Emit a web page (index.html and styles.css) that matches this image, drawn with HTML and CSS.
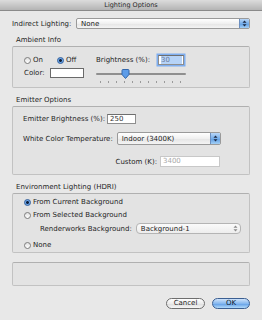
FILE: index.html
```html
<!DOCTYPE html>
<html lang="en">
<head>
    <meta charset="UTF-8">
    <meta name="viewport" content="width=device-width, initial-scale=1.0">
    <title>Lighting Options</title>
    <link rel="stylesheet" href="styles.css">
</head>
<body>

    <div class="titlebar">Lighting Options</div>

    <div class="content">

        <div class="row indirect-row">
            <span class="label">Indirect Lighting:</span>
            <div class="popup popup-indirect">
                <span class="popup-text">None</span>
                <span class="popup-arrows">
                    <svg width="5" height="7" viewBox="0 0 5 7"><path d="M2.5 0.5 L4.5 2.8 L0.5 2.8 Z M2.5 6.5 L4.5 4.2 L0.5 4.2 Z" fill="#1d2a44"/></svg>
                </span>
            </div>
        </div>

        <!-- Ambient -->
        <div class="group-title first">Ambient Info</div>
        <div class="group-box ambient-box">
            <div class="col-left">
                <div class="radios">
                    <span class="radio"><span class="dot"></span>On</span>
                    <span class="radio"><span class="dot on"></span>Off</span>
                </div>
                <div class="color-row">
                    <span>Color:</span>
                    <span class="swatch"></span>
                </div>
            </div>
            <div class="col-right">
                <div class="bright-row">
                    <span>Brightness (%):</span>
                    <span class="field field-focus"><span class="selected">30</span></span>
                </div>
                <div class="slider">
                    <div class="track"></div>
                    <svg class="thumb" width="9" height="10" viewBox="0 0 9 10"><path d="M1 1.5 Q1 0.5 2 0.5 L7 0.5 Q8 0.5 8 1.5 L8 5.5 L4.5 9.5 L1 5.5 Z" fill="#5d9ce8" stroke="#3266aa" stroke-width="1"/></svg>
                </div>
                <div class="ticks">
                    <span></span><span></span><span></span><span></span><span></span><span></span>
                    <span></span><span></span><span></span><span></span><span></span>
                </div>
            </div>
        </div>

        <!-- Emitter -->
        <div class="group-title">Emitter Options</div>
        <div class="group-box emitter-box">
            <div class="row">
                <span>Emitter Brightness (%):</span>
                <span class="field field-emitter">250</span>
            </div>
            <div class="row temp-row">
                <span>White Color Temperature:</span>
                <div class="popup popup-temp">
                    <span class="popup-text">Indoor (3400K)</span>
                    <span class="popup-arrows">
                        <svg width="5" height="7" viewBox="0 0 5 7"><path d="M2.5 0.5 L4.5 2.8 L0.5 2.8 Z M2.5 6.5 L4.5 4.2 L0.5 4.2 Z" fill="#1d2a44"/></svg>
                    </span>
                </div>
            </div>
            <div class="row custom-row">
                <span>Custom (K):</span>
                <span class="field field-custom disabled">3400</span>
            </div>
        </div>

        <!-- Environment -->
        <div class="group-title">Environment Lighting (HDRI)</div>
        <div class="group-box env-box">
            <span class="radio"><span class="dot on"></span>From Current Background</span>
            <span class="radio second"><span class="dot"></span>From Selected Background</span>
            <div class="row rw-row">
                <span>Renderworks Background:</span>
                <div class="popup popup-rw">
                    <span class="popup-text">Background-1</span>
                    <span class="popup-arrows plain">
                        <svg width="5" height="7" viewBox="0 0 5 7"><path d="M2.5 0.5 L4.5 2.8 L0.5 2.8 Z M2.5 6.5 L4.5 4.2 L0.5 4.2 Z" fill="#8a8a8a"/></svg>
                    </span>
                </div>
            </div>
            <span class="radio none"><span class="dot"></span>None</span>
        </div>

        <div class="group-box empty-box"></div>

        <div class="buttons">
            <button class="btn cancel">Cancel</button>
            <button class="btn ok">OK</button>
        </div>

    </div>

</body>
</html>
```

FILE: styles.css
```css
body {
    font-family: "DejaVu Sans", Verdana, sans-serif;
    font-size: 7px;
    color: #1e1e1e;
    background-color: #e8e8e8;
    margin: 0;
    width: 262px;
    height: 320px;
    overflow: hidden;
}

/* Window title */
.titlebar {
    height: 10px;
    line-height: 10px;
    font-size: 6.5px;
    text-align: center;
    color: #2a2a2a;
    background: linear-gradient(#dcdcdc, #b4b4b4);
    border-bottom: 1px solid #8a8a8a;
}

.content {
    padding: 7px 12px 0 12px;
}

.row {
    display: flex;
    align-items: center;
}

.indirect-row {
    height: 11px;
}

.indirect-row .label {
    width: 60px;
    margin-right: 4px;
    white-space: nowrap;
}

/* Popup menus */
.popup {
    display: flex;
    align-items: center;
    box-sizing: border-box;
    background: linear-gradient(#ffffff, #f0f0f0 50%, #e4e4e4 51%, #f4f4f4);
    border: 1px solid #9a9a9a;
    border-radius: 2px;
    overflow: hidden;
}

.popup-text {
    flex: 1;
    padding-left: 4px;
}

.popup-arrows {
    width: 9px;
    align-self: stretch;
    display: flex;
    align-items: center;
    justify-content: center;
    background: linear-gradient(#b9d6f7, #76aeea 50%, #5b9be3 51%, #a4d0f6);
    border-left: 1px solid #6c8fbf;
}

.popup-arrows.plain {
    background: none;
    border-left: none;
}

.popup-indirect {
    flex: 1;
    height: 11px;
}

.popup-temp {
    width: 104px;
    height: 13px;
    margin-left: 4px;
}

.popup-rw {
    width: 105px;
    height: 11px;
    margin-left: 4px;
    border-color: #b4b4b4;
    border-radius: 4px;
    background: linear-gradient(#fafafa, #ededed);
}

/* Group boxes */
.group-title {
    height: 9px;
    line-height: 9px;
    padding-left: 4px;
    margin-top: 8px;
    margin-bottom: 1px;
}

.group-title.first {
    margin-top: 7px;
}

.group-box {
    box-sizing: border-box;
    background-color: #e3e3e3;
    border: 1px solid #c2c2c2;
    border-top-color: #b0b0b0;
    border-radius: 2px;
}

.ambient-box {
    height: 42px;
    display: flex;
}

.col-left {
    width: 83px;
    padding: 8px 0 0 11px;
    box-sizing: border-box;
}

.radios {
    display: flex;
    gap: 14px;
    height: 10px;
}

.radio {
    display: flex;
    align-items: center;
    height: 10px;
}

.dot {
    width: 7px;
    height: 7px;
    box-sizing: border-box;
    border: 1px solid #7d7d7d;
    border-radius: 50%;
    background: linear-gradient(#e0e0e0, #ffffff);
    margin-right: 2px;
}

.dot.on {
    border-color: #2e5d9c;
    background: radial-gradient(circle, #10203a 0, #10203a 1.2px, #5f9de6 1.6px, #9cc6f4 100%);
}

.color-row {
    display: flex;
    align-items: center;
    height: 10px;
    margin-top: 3px;
}

.swatch {
    width: 34px;
    height: 10px;
    box-sizing: border-box;
    margin-left: 5px;
    background: #ffffff;
    border: 1px solid #6a6a6a;
}

.col-right {
    padding-top: 8px;
    width: 90px;
}

.bright-row {
    display: flex;
    align-items: center;
    justify-content: space-between;
    height: 10px;
}

/* Text fields */
.field {
    box-sizing: border-box;
    background: #ffffff;
    border: 1px solid #8e8e8e;
    border-top-color: #6e6e6e;
    padding-left: 2px;
    line-height: 8px;
    height: 10px;
}

.field-focus {
    width: 26px;
    margin-right: 2px;
    box-shadow: 0 0 0 1.5px #7eaef0;
}

.selected {
    display: inline-block;
    background: #b6d3f7;
    width: 21px;
    color: #6a7a9a;
}

.field-emitter {
    width: 29px;
    margin-left: 2px;
    color: #333;
}

.field-custom {
    width: 60px;
    height: 11px;
    margin-left: 3px;
    border-color: #c8c8c8;
    line-height: 9px;
}

.disabled {
    color: #a8a8a8;
}

/* Slider */
.slider {
    position: relative;
    height: 10px;
    margin-top: 4px;
    display: flex;
    align-items: center;
}

.track {
    width: 90px;
    height: 2px;
    background: #8f8f8f;
    border-radius: 1px;
}

.thumb {
    position: absolute;
    left: 25px;
    top: 0;
}

.ticks {
    display: flex;
    justify-content: space-between;
    padding: 0 5px 0 4px;
    margin-top: 2px;
    height: 2px;
}

.ticks span {
    width: 1px;
    height: 2px;
    background: #9a9a9a;
}

.emitter-box {
    height: 69px;
    padding: 7px 0 0 10px;
}

.emitter-box .row {
    height: 10px;
}

.emitter-box .temp-row {
    height: 13px;
    margin-top: 8px;
}

.emitter-box .custom-row {
    height: 11px;
    margin-top: 11px;
    width: 197px;
    justify-content: flex-end;
}

.env-box {
    height: 60px;
    padding: 3px 0 0 11px;
}

.env-box .second {
    margin-top: 3px;
}

.rw-row {
    height: 11px;
    margin-top: 3px;
    padding-left: 16px;
}

.env-box .none {
    margin-top: 6px;
}

.empty-box {
    height: 24px;
    margin-top: 9px;
}

/* Buttons */
.buttons {
    display: flex;
    justify-content: flex-end;
    gap: 7px;
    margin-top: 12px;
}

.btn {
    font-family: "DejaVu Sans", Verdana, sans-serif;
    font-size: 7px;
    height: 11px;
    padding: 0;
    border-radius: 6px;
    cursor: pointer;
    line-height: 9px;
}

.cancel {
    width: 39px;
    background: linear-gradient(#ffffff, #ececec 50%, #dcdcdc 51%, #f6f6f6);
    border: 1px solid #6e6e6e;
    color: #1e1e1e;
}

.ok {
    width: 38px;
    background: linear-gradient(#cfe3fa, #86b8ef 50%, #5d9be5 51%, #b2dafa);
    border: 1px solid #3b5f92;
    color: #0f1a2a;
}
```
